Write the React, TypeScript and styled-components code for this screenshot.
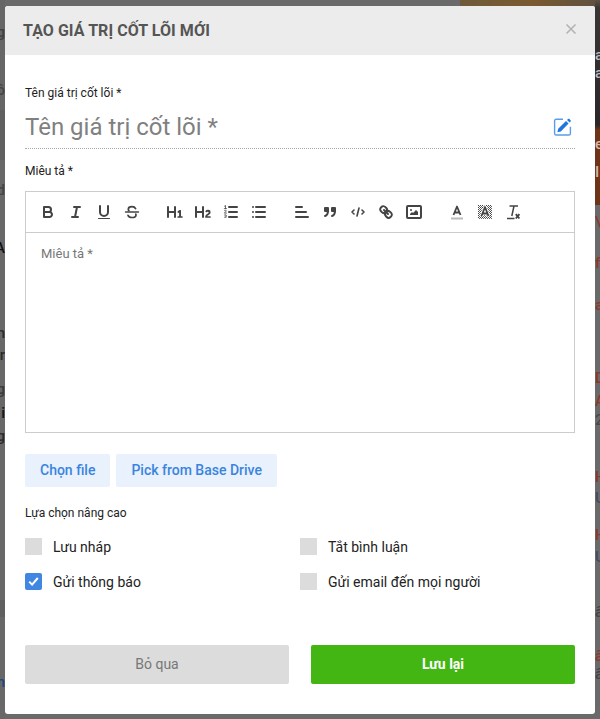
import React from "react";
import styled, { createGlobalStyle } from "styled-components";

const Global = createGlobalStyle`
  html, body { margin: 0; padding: 0; background: #6a6a6a; }
  * { box-sizing: border-box; }
  body { font-family: Roboto, "Noto Sans", "Liberation Sans", sans-serif; overflow: hidden; }
`;

const Page = styled.div`
  position: relative;
  width: 600px;
  height: 719px;
  padding: 6px 5px 5px;
  overflow: hidden;
  background: #6a6a6a;
`;
const TopBand = styled.div`
  position: absolute;
  top: 0;
  left: 460px;
  right: 0;
  height: 6px;
  background: linear-gradient(90deg, #6d5a3a, #7a5a30 50%, #5e5142);
`;
const Rail = styled.div<{ $side: "left" | "right" }>`
  position: absolute;
  top: 0;
  ${(p) => p.$side}: 0;
  width: 5px;
  height: 719px;
  overflow: hidden;
  background: ${(p) =>
    p.$side === "right"
      ? `linear-gradient(180deg, #5e5142 0, #3a3535 8px, #2b2728 125px, #6e3417 130px, #6e3417 205px, #6a6a6a 205px, #6a6a6a 100%)`
      : `linear-gradient(180deg, #666 0, #666 110px, #606060 110px, #606060 160px, #686868 160px, #686868 600px, #606060 600px, #606060 617px, #686868 617px)`};
`;
const Fragment = styled.span<{ $top: number; $side: "left" | "right"; $color: string }>`
  position: absolute;
  top: ${(p) => p.$top}px;
  ${(p) => (p.$side === "right" ? "left: 0" : "right: 0")};
  font-size: 15px;
  font-weight: 500;
  line-height: 16px;
  white-space: nowrap;
  color: ${(p) => p.$color};
`;

const leftFragments: [number, string, string][] = [
  [24, "g", "#3f3f3f"],
  [82, "ô", "#454545"],
  [182, "d", "#454545"],
  [240, "A", "#111"],
  [325, "n", "#2a2a2a"],
  [347, "r", "#2a2a2a"],
  [381, "g", "#3a3a3a"],
  [405, "i", "#111"],
  [428, "g", "#2a2a2a"],
  [674, "m", "#1b4a78"],
];
const rightFragments: [number, string, string][] = [
  [47, "a", "#bdbdbd"],
  [65, "a", "#bdbdbd"],
  [136, "e", "#d9b8a6"],
  [164, "II", "#d9b8a6"],
  [214, "\\", "#8a3a2a"],
  [255, "f", "#8a3a2a"],
  [297, "a", "#8a3a2a"],
  [370, "D", "#8a3a2a"],
  [393, "A", "#8a3a2a"],
  [412, "2", "#4a4a4a"],
  [469, "H", "#8a3a2a"],
  [490, "U", "#444c60"],
  [527, "H", "#8a3a2a"],
  [549, "U", "#444c60"],
  [604, "â", "#444"],
  [648, "â", "#8a3a2a"],
  [666, "â", "#444"],
];

const Modal = styled.div`
  position: relative;
  width: 590px;
  height: 708px;
  background: #fff;
  border-radius: 3px;
  overflow: hidden;
  display: flex;
  flex-direction: column;
`;
const Header = styled.div`
  height: 49px;
  flex: none;
  background: #ececec;
  display: flex;
  align-items: center;
  justify-content: space-between;
  padding: 0 18px;
`;
const Title = styled.div`
  font-size: 16px;
  font-weight: 700;
  letter-spacing: 0.05px;
  color: #555;
  line-height: 49px;
`;
const CloseIcon = styled.svg`
  width: 12px;
  height: 12px;
  margin-top: -3px;
  stroke: #b3b3b3;
  stroke-width: 1.6;
  fill: none;
`;
const Body = styled.div`
  flex: 1;
  padding: 30px 20px 0;
  display: flex;
  flex-direction: column;
`;
const Label = styled.div`
  font-size: 12px;
  font-weight: 400;
  line-height: 16px;
  color: #222;
`;
const NameRow = styled.div`
  margin-top: 1px;
  height: 47px;
  display: flex;
  align-items: center;
  justify-content: space-between;
  border-bottom: 1px dotted #aaa;
  margin-bottom: 14px;
  padding-top: 4px;
`;
const NameText = styled.div`
  font-size: 24px;
  line-height: 32px;
  color: #808080;
`;
const EditIcon = styled.svg`
  width: 20px;
  height: 20px;
  margin-right: 2px;
`;
const Editor = styled.div`
  margin-top: 12px;
  height: 242px;
  border: 1px solid #ccc;
  display: flex;
  flex-direction: column;
`;
const Toolbar = styled.div`
  height: 41px;
  flex: none;
  border-bottom: 1px solid #ccc;
  padding: 0 8px;
  display: flex;
  align-items: center;
`;
const ToolGroup = styled.div`
  display: flex;
  margin-right: 15px;
`;
const ToolIcon = styled.svg`
  display: block;
  width: 28px;
  height: 18px;
  fill: none;
  stroke: #444;
  stroke-width: 2;
  stroke-linecap: round;
  stroke-linejoin: round;
`;
const Placeholder = styled.div`
  padding: 12px 15px;
  font-size: 13px;
  line-height: 17px;
  color: #777;
`;
const FileRow = styled.div`
  margin-top: 21px;
  display: flex;
  gap: 6px;
`;
const FileButton = styled.div`
  height: 33px;
  padding: 0 15px;
  border-radius: 2px;
  background: #e8f1fc;
  color: #3a84e0;
  font-size: 14px;
  font-weight: 500;
  line-height: 33px;
`;
const Advanced = styled(Label)`
  margin-top: 18px;
`;
const Options = styled.div`
  margin-top: 17px;
  display: grid;
  grid-template-columns: 275px 1fr;
  row-gap: 18px;
`;
const Option = styled.div`
  height: 17px;
  display: flex;
  align-items: center;
  gap: 11px;
  font-size: 14px;
  color: #222;
`;
const Check = styled.div<{ $on?: boolean }>`
  width: 17px;
  height: 17px;
  flex: none;
  border-radius: ${(p) => (p.$on ? "2px" : "0")};
  background: ${(p) => (p.$on ? "#3f87e0" : "#dcdcdc")};
  display: flex;
  align-items: center;
  justify-content: center;
`;
const Footer = styled.div`
  margin-top: 55px;
  display: grid;
  grid-template-columns: 264px 264px;
  justify-content: space-between;
`;
const ActionButton = styled.div<{ $primary?: boolean }>`
  height: 39px;
  border-radius: 2px;
  text-align: center;
  line-height: 39px;
  font-size: 14px;
  font-weight: ${(p) => (p.$primary ? 700 : 400)};
  background: ${(p) => (p.$primary ? "#43b614" : "#dcdcdc")};
  color: ${(p) => (p.$primary ? "#fff" : "#777")};
`;

const Icon = ({ children }: { children: React.ReactNode }) => (
  <ToolIcon viewBox="-5 0 28 18">{children}</ToolIcon>
);

export default function App() {
  return (
    <Page>
      <Global />
      <TopBand />
      <Rail $side="left">
        {leftFragments.map(([top, text, color]) => (
          <Fragment key={top} $side="left" $top={top} $color={color}>
            {text}
          </Fragment>
        ))}
      </Rail>
      <Rail $side="right">
        {rightFragments.map(([top, text, color]) => (
          <Fragment key={top} $side="right" $top={top} $color={color}>
            {text}
          </Fragment>
        ))}
      </Rail>
      <Modal>
        <Header>
          <Title>TẠO GIÁ TRỊ CỐT LÕI MỚI</Title>
          <CloseIcon viewBox="0 0 12 12">
            <path d="M1.5 1.5l9 9M10.5 1.5l-9 9" />
          </CloseIcon>
        </Header>
        <Body>
          <Label>Tên giá trị cốt lõi *</Label>
          <NameRow>
            <NameText>Tên giá trị cốt lõi *</NameText>
            <EditIcon viewBox="0 0 20 20">
              <path d="M10 2.2H3.2a1.6 1.6 0 0 0-1.6 1.6v12.6A1.6 1.6 0 0 0 3.2 18h12.6a1.6 1.6 0 0 0 1.6-1.6V9.8" fill="none" stroke="#5a9cec" strokeWidth="1.4" />
              <path d="M4.4 15.2l.8-3.4 7.8-7.8 2.6 2.6-7.8 7.8zM14 3l1-1c.4-.4 1-.4 1.4 0l1.2 1.2c.4.4.4 1 0 1.4l-1 1z" fill="#1f76e0" />
            </EditIcon>
          </NameRow>
          <Label>Miêu tả *</Label>
          <Editor>
            <Toolbar>
              <ToolGroup>
                <Icon>
                  <path d="M5,4H9.5A2.5,2.5,0,0,1,12,6.5v0A2.5,2.5,0,0,1,9.5,9H5V4Z" />
                  <path d="M5,9h5.5A2.5,2.5,0,0,1,13,11.5v0A2.5,2.5,0,0,1,10.5,14H5V9Z" />
                </Icon>
                <Icon>
                  <path d="M7 4h6M5 14h6M8 14l2-10" />
                </Icon>
                <Icon>
                  <path d="M5,3V9a4,4,0,0,0,4,4H9a4,4,0,0,0,4-4V3" />
                  <rect x="3" y="15" width="12" height="1" rx=".5" fill="#444" strokeWidth="0" />
                </Icon>
                <Icon>
                  <path d="M2.5 9h13" strokeWidth="1.4" />
                  <path d="M12.6 5.6C12 4.3 10.7 3.6 9 3.6c-2.2 0-3.7 1-3.7 2.6 0 .6.2 1.1.6 1.5M12.8 11c.1.3.2.6.2.9 0 1.6-1.6 2.6-4 2.6-2 0-3.4-.8-4-2.2" strokeWidth="1.7" />
                </Icon>
              </ToolGroup>
              <ToolGroup>
                <Icon>
                  <path fill="#444" strokeWidth="0" d="M10,4V14a1,1,0,0,1-2,0V10H3v4a1,1,0,0,1-2,0V4A1,1,0,0,1,3,4V8H8V4a1,1,0,0,1,2,0Zm6.06787,9.209H14.98975V7.59863a.54085.54085,0,0,0-.605-.60547h-.62744a1.01119,1.01119,0,0,0-.748.29688L11.645,8.56641a.5435.5435,0,0,0-.022.8584l.28613.30762a.53861.53861,0,0,0,.84717.0332l.09912-.08789a1.2137,1.2137,0,0,0,.2417-.35254h.02246s-.01123.30859-.01123.60547V13.209H12.041a.54085.54085,0,0,0-.605.60547v.43945a.54085.54085,0,0,0,.605.60547h4.02686a.54085.54085,0,0,0,.605-.60547v-.43945A.54085.54085,0,0,0,16.06787,13.209Z" />
                </Icon>
                <Icon>
                  <path fill="#444" strokeWidth="0" d="M16.73975,13.81445v.43945a.54085.54085,0,0,1-.605.60547H11.855a.58392.58392,0,0,1-.64893-.60547V14.0127c0-2.90527,3.39941-3.42187,3.39941-4.55469a.77675.77675,0,0,0-.84717-.78125,1.17684,1.17684,0,0,0-.83594.38477c-.2749.26367-.561.374-.85791.13184l-.4292-.34082c-.30811-.24219-.38525-.51758-.1543-.81445a2.97155,2.97155,0,0,1,2.45361-1.17676,2.45393,2.45393,0,0,1,2.68408,2.40918c0,2.45312-3.1792,2.92676-3.27832,3.93848h2.79443A.54085.54085,0,0,1,16.73975,13.81445ZM9,3A.99974.99974,0,0,0,8,4V8H3V4A1,1,0,0,0,1,4V14a1,1,0,0,0,2,0V10H8v4a1,1,0,0,0,2,0V4A.99974.99974,0,0,0,9,3Z" />
                </Icon>
                <Icon>
                  <path d="M7 4h8M7 9h8M7 14h8" />
                  <path d="M2.5 3.2l1-.7v3M2.3 5.6h2.2M2.4 7.6c.4-.5 2-.5 2 .4 0 .7-2 1.2-2 2.1h2.1M2.4 12c.6-.4 2-.3 2 .4s-.8.6-1 .6c.3 0 1.1.2 1.1.8 0 .8-1.5.8-2.1.4" strokeWidth="0.8" />
                </Icon>
                <Icon>
                  <path d="M6 4h9M6 9h9M6 14h9M3 4h0M3 9h0M3 14h0" />
                </Icon>
              </ToolGroup>
              <ToolGroup>
                <Icon>
                  <path d="M3 9h10M3 14h12M3 4h6" />
                </Icon>
                <Icon>
                  <rect x="4" y="5" width="3" height="3" fill="#444" />
                  <rect x="11" y="5" width="3" height="3" fill="#444" />
                  <path d="M7 8c0 4.03-3 5-3 5M14 8c0 4.03-3 5-3 5" />
                </Icon>
                <Icon>
                  <path d="M5 7L3 9l2 2M13 7l2 2-2 2M10 5L8 13" strokeWidth="1.6" />
                </Icon>
                <Icon>
                  <path d="M7 7l4 4" />
                  <path d="M8.9,4.577a3.476,3.476,0,0,1,.36,4.679A3.476,3.476,0,0,1,4.577,8.9C3.185,7.5,2.035,6.4,4.217,4.217S7.5,3.185,8.9,4.577Z" />
                  <path d="M13.423,9.1a3.476,3.476,0,0,0-4.679-.36,3.476,3.476,0,0,0,.36,4.679c1.392,1.392,2.5,2.542,4.679.36S14.815,10.5,13.423,9.1Z" />
                </Icon>
                <Icon>
                  <rect x="2" y="3" width="14" height="12" rx="1" />
                  <circle cx="6" cy="7" r="1" fill="#444" strokeWidth="0" />
                  <path d="M5 12v-1l2-2 1 1 3-3 2 2v3z" fill="#444" strokeWidth="0" />
                </Icon>
              </ToolGroup>
              <ToolGroup>
                <Icon>
                  <path d="M3 15.5h12" stroke="#bbb" strokeLinecap="butt" />
                  <path d="M5.5 12L9 3.5l3.5 8.5M11.4 9.5H6.6" strokeWidth="1.8" strokeLinecap="butt" />
                </Icon>
                <Icon>
                  <defs>
                    <pattern id="dither" width="2" height="2" patternUnits="userSpaceOnUse">
                      <rect width="1" height="1" fill="#444" stroke="none" />
                      <rect x="1" y="1" width="1" height="1" fill="#666" stroke="none" />
                    </pattern>
                  </defs>
                  <rect x="2" y="2" width="14" height="14" fill="url(#dither)" strokeWidth="0" />
                  <path d="M5.5 13L9 4l3.5 9M11.4 10.5H6.6" stroke="#fff" strokeWidth="3.4" strokeLinecap="butt" />
                  <path d="M5.5 13L9 4l3.5 9M11.4 10.5H6.6" strokeWidth="1.8" strokeLinecap="butt" />
                </Icon>
                <Icon>
                  <path d="M5.5 3h8.5M10 3L7.8 13M3 15.5h7.5" strokeWidth="1.5" strokeLinecap="butt" />
                  <path d="M11.8 11.2l3.6 4.3M15.4 11.2l-3.6 4.3" strokeWidth="1.9" strokeLinecap="butt" />
                </Icon>
              </ToolGroup>
            </Toolbar>
            <Placeholder>Miêu tả *</Placeholder>
          </Editor>
          <FileRow>
            <FileButton>Chọn file</FileButton>
            <FileButton>Pick from Base Drive</FileButton>
          </FileRow>
          <Advanced>Lựa chọn nâng cao</Advanced>
          <Options>
            <Option>
              <Check />
              Lưu nháp
            </Option>
            <Option>
              <Check />
              Tắt bình luận
            </Option>
            <Option>
              <Check $on>
                <svg width="11" height="9" viewBox="0 0 11 9">
                  <path d="M1.2 4.6l2.9 3L9.8 1" fill="none" stroke="#fff" strokeWidth="2" />
                </svg>
              </Check>
              Gửi thông báo
            </Option>
            <Option>
              <Check />
              Gửi email đến mọi người
            </Option>
          </Options>
          <Footer>
            <ActionButton>Bỏ qua</ActionButton>
            <ActionButton $primary>Lưu lại</ActionButton>
          </Footer>
        </Body>
      </Modal>
    </Page>
  );
}
